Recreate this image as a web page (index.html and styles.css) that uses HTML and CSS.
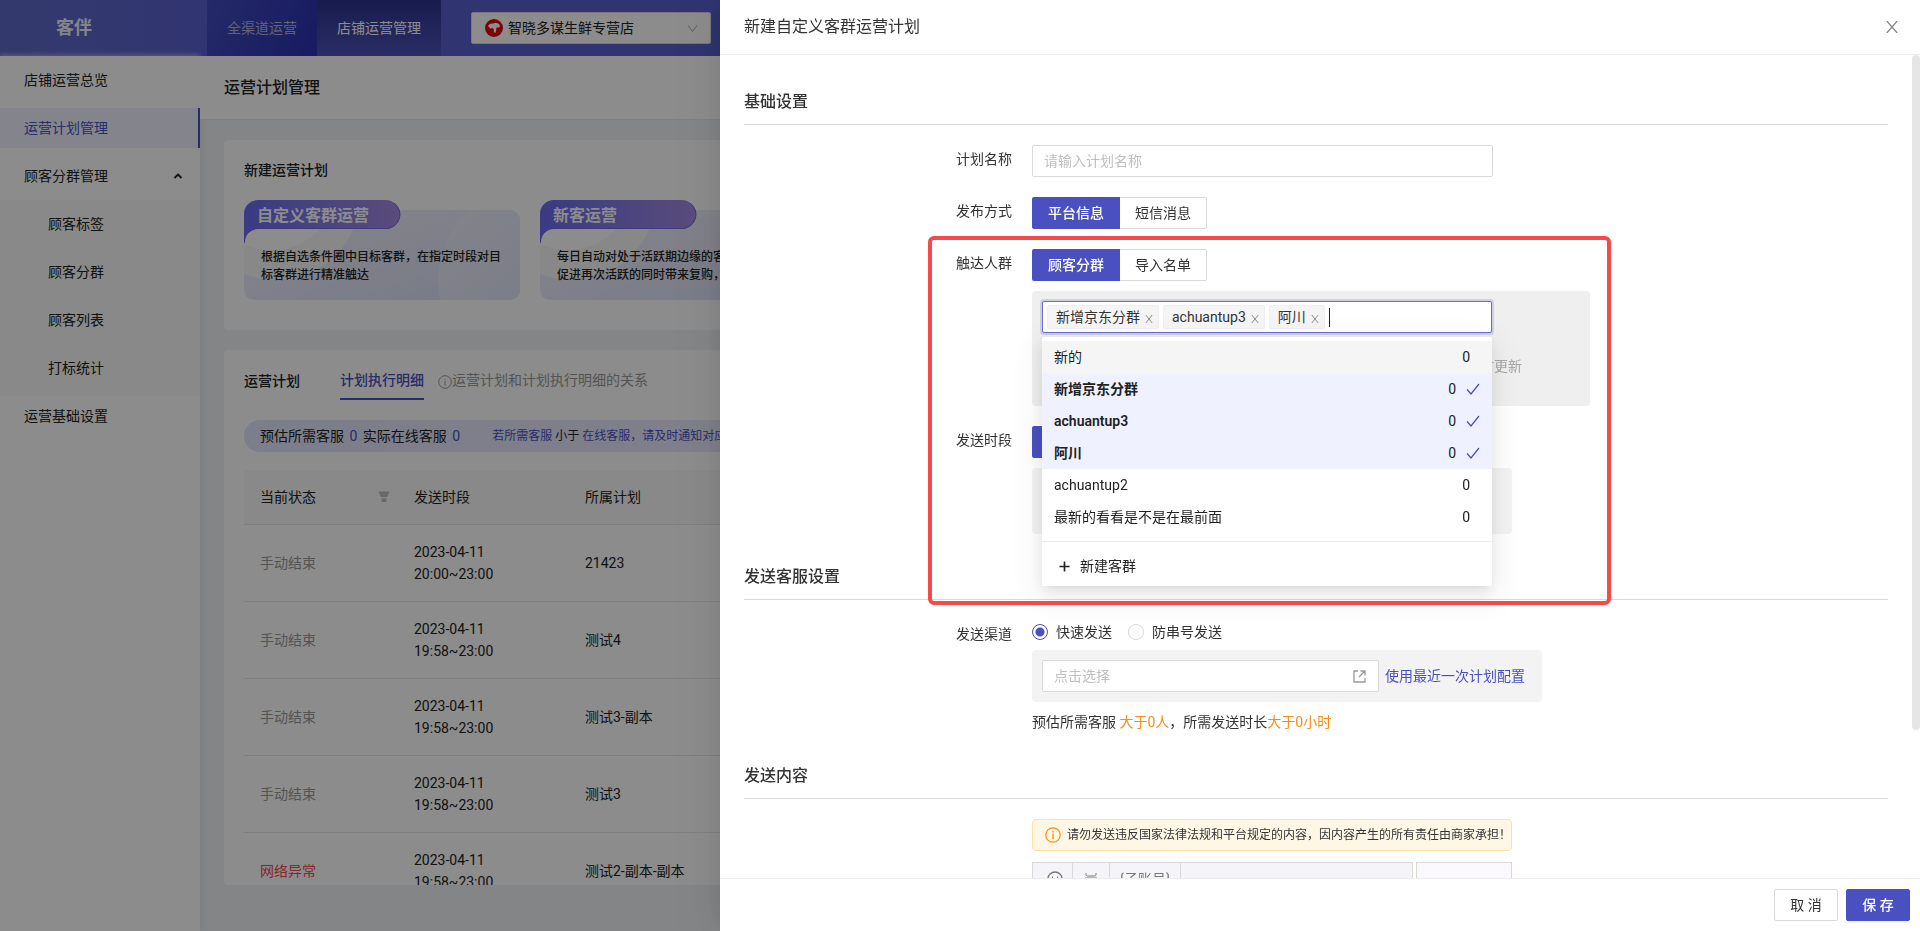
FILE: index.html
```
<!DOCTYPE html>
<html lang="zh-CN">
<head>
<meta charset="utf-8">
<title>客伴 - 运营计划管理</title>
<link rel="stylesheet" href="styles.css">
</head>
<body>
<div class="app">
  <header class="topbar">
    <div class="brand">客伴</div>
    <nav class="top-nav">
      <a class="top-link" href="#">全渠道运营</a>
      <a class="top-link top-link-active" href="#">店铺运营管理</a>
    </nav>
    <button class="shop-select" type="button">
      <svg class="shop-logo" viewBox="0 0 18 18"><circle cx="9" cy="9" r="9" fill="#e60012"/><path d="M3 7.2C3.800 5 6 4.300 8 4.700C9.200 3.600 11.600 3.500 12.800 4.600C14.800 5 15.400 6.800 14.400 8.300C13.600 8.900 12.800 8.300 11.800 8.500C10.800 9 11.700 11.500 10.600 13.400C9.800 14 8.600 13.600 8.800 12.300C9.200 11 8.700 9.800 7.800 9.200C7 8.800 6.400 10 5.200 9.600C4.400 9.200 4.800 8.300 4.200 7.900Z" fill="#fff"/></svg>
      <span class="shop-name">智晓多谋生鲜专营店</span>
      <svg class="chevron" viewBox="0 0 12 12"><path d="M1 2.5L6 9L11 2.5" fill="none" stroke="#bfbfbf" stroke-width="1.2"/></svg>
    </button>
  </header>
  <div class="shell">
    <aside class="sidebar">
      <a class="side-link" href="#">店铺运营总览</a>
      <a class="side-link side-active" href="#">运营计划管理</a>
      <a class="side-link" href="#">顾客分群管理
        <svg class="side-arrow" viewBox="0 0 10 10"><path d="M1.5 7L5 3.5L8.5 7" fill="none" stroke="#222" stroke-width="1.8"/></svg>
      </a>
      <div class="submenu">
        <a class="side-link" href="#">顾客标签</a>
        <a class="side-link" href="#">顾客分群</a>
        <a class="side-link" href="#">顾客列表</a>
        <a class="side-link" href="#">打标统计</a>
      </div>
      <a class="side-link" href="#">运营基础设置</a>
    </aside>
    <main class="main">
      <h1 class="page-title">运营计划管理</h1>
      <div class="content">
        <section class="card card-new">
          <h2 class="card-title">新建运营计划</h2>
          <div class="features">
            <article class="feature">
              <svg class="feature-bg" viewBox="0 0 276 100">
                <defs>
                  <linearGradient id="base" x1="0" y1="0" x2="1" y2="1"><stop offset="0" stop-color="#f4f3fa"/><stop offset="1" stop-color="#d9def6"/></linearGradient>
                  <linearGradient id="ribbon" x1="0" y1="0" x2="1" y2="0"><stop offset="0" stop-color="#6a6bf0"/><stop offset="1" stop-color="#a48be0"/></linearGradient>
                  <linearGradient id="arc" x1="0" y1="0" x2="1" y2="1"><stop offset="0" stop-color="#f0f2fc"/><stop offset="1" stop-color="#d4daf2"/></linearGradient>
                  <clipPath id="plate"><rect y="10" width="276" height="90" rx="10"/></clipPath>
                </defs>
                <g clip-path="url(#plate)">
                  <rect y="10" width="276" height="90" fill="url(#base)"/>
                  <circle cx="32" cy="-4" r="84" fill="#f8f8f8"/>
                  <circle cx="28" cy="-14" r="65" fill="#fff" stroke="#f2f3f3"/>
                  <circle cx="290" cy="80" r="96" fill="url(#arc)"/>
                </g>
                <path d="M0 44V14A14 14 0 0 1 14 0H141.500A14.500 14.500 0 0 1 141.500 29H14A13 13 0 0 0 1 42Z" fill="url(#ribbon)"/>
                <path d="M14 28.500H141.500A14 14 0 0 0 150 3" fill="none" stroke="#7768de"/>
              </svg>
              <h3 class="feature-title">自定义客群运营</h3>
              <p class="feature-text">根据自选条件圈中目标客群，在指定时段对目标客群进行精准触达</p>
            </article>
            <article class="feature">
              <svg class="feature-bg" viewBox="0 0 276 100">
                <g clip-path="url(#plate)">
                  <rect y="10" width="276" height="90" fill="url(#base)"/>
                  <circle cx="32" cy="-4" r="84" fill="#f8f8f8"/>
                  <circle cx="28" cy="-14" r="65" fill="#fff" stroke="#f2f3f3"/>
                  <circle cx="290" cy="80" r="96" fill="url(#arc)"/>
                </g>
                <path d="M0 44V14A14 14 0 0 1 14 0H141.500A14.500 14.500 0 0 1 141.500 29H14A13 13 0 0 0 1 42Z" fill="url(#ribbon)"/>
                <path d="M14 28.500H141.500A14 14 0 0 0 150 3" fill="none" stroke="#7768de"/>
              </svg>
              <h3 class="feature-title">新客运营</h3>
              <p class="feature-text">每日自动对处于活跃期边缘的客户触达，<br>促进再次活跃的同时带来复购，提升销量</p>
            </article>
          </div>
        </section>
        <section class="card card-list">
          <div class="tabs">
            <button class="tab" type="button">运营计划</button>
            <button class="tab tab-active" type="button">计划执行明细</button>
            <a class="tab-help" href="#">
              <svg class="icon-14" viewBox="0 0 14 14"><circle cx="7" cy="7" r="6.300" fill="none" stroke="#999" stroke-width="1"/><path d="M7 5.800V10.500M7 3.500V4.700" stroke="#999"/></svg>运营计划和计划执行明细的关系</a>
          </div>
          <div class="summary">
            <span>预估所需客服 <b class="num">0</b> 实际在线客服 <b class="num">0</b></span>
            <span class="summary-tip"><em>若所需客服</em> 小于 <em>在线客服，请及时通知对应客服上线</em></span>
          </div>
          <div class="table-wrap">
          <table class="table">
            <thead>
              <tr><th class="col-state"><div class="th-flex">当前状态
                <svg class="filter" viewBox="0 0 12 12"><path d="M.5 .5H11.500L9 6.200H3ZM3.500 7.400H8.500V11H3.500Z" fill="#bfbfbf"/></svg></div></th><th class="col-time">发送时段</th><th>所属计划</th></tr>
            </thead>
            <tbody>
              <tr><td class="muted">手动结束</td><td>2023-04-11<br>20:00~23:00</td><td>21423</td></tr>
              <tr><td class="muted">手动结束</td><td>2023-04-11<br>19:58~23:00</td><td>测试4</td></tr>
              <tr><td class="muted">手动结束</td><td>2023-04-11<br>19:58~23:00</td><td>测试3-副本</td></tr>
              <tr><td class="muted">手动结束</td><td>2023-04-11<br>19:58~23:00</td><td>测试3</td></tr>
              <tr><td class="error">网络异常</td><td>2023-04-11<br>19:58~23:00</td><td>测试2-副本-副本</td></tr>
            </tbody>
          </table>
          </div>
        </section>
      </div>
    </main>
  </div>
</div>

<div class="mask"></div>

<section class="drawer" role="dialog" aria-label="新建自定义客群运营计划">
  <header class="drawer-head">
    <h2 class="drawer-title">新建自定义客群运营计划</h2>
    <button class="close" type="button" aria-label="关闭"><svg class="close-icon" viewBox="0 0 12 12"><path d="M.8 0L11.200 12M11.200 0L.8 12" stroke="#888" stroke-width="1.300"/></svg></button>
  </header>
  <div class="drawer-body">
    <h3 class="group-title">基础设置</h3>
    <div class="row">
      <label class="label" for="plan-name">计划名称</label>
      <input class="input" id="plan-name" type="text" placeholder="请输入计划名称">
    </div>
    <div class="row">
      <span class="label">发布方式</span>
      <div class="segment"><button class="seg seg-on" type="button">平台信息</button><button class="seg" type="button">短信消息</button></div>
    </div>
    <div class="row">
      <span class="label">触达人群</span>
      <div class="stack">
        <div class="segment"><button class="seg seg-on" type="button">顾客分群</button><button class="seg" type="button">导入名单</button></div>
        <div class="panel panel-crowd">
          <div class="select-wrap">
            <div class="multi">
              <span class="tag">新增京东分群<svg class="tag-x" viewBox="0 0 8 8"><path d="M.8 0L7.200 8M7.200 0L.8 8" stroke="#8c8c8c"/></svg></span>
              <span class="tag">achuantup3<svg class="tag-x" viewBox="0 0 8 8"><path d="M.8 0L7.200 8M7.200 0L.8 8" stroke="#8c8c8c"/></svg></span>
              <span class="tag">阿川<svg class="tag-x" viewBox="0 0 8 8"><path d="M.8 0L7.200 8M7.200 0L.8 8" stroke="#8c8c8c"/></svg></span>
              <span class="caret"></span>
            </div>
            <div class="dropdown">
              <ul class="options" role="listbox" aria-label="顾客分群">
                <li class="option option-hover" role="option">新的<span class="count">0</span></li>
                <li class="option option-on" role="option" aria-selected="true">新增京东分群<span class="count">0</span><svg class="check" viewBox="0 0 14 14"><path d="M1 7.500L5 12L13 2" fill="none" stroke="#4a50bf" stroke-width="1.300"/></svg></li>
                <li class="option option-on" role="option" aria-selected="true">achuantup3<span class="count">0</span><svg class="check" viewBox="0 0 14 14"><path d="M1 7.500L5 12L13 2" fill="none" stroke="#4a50bf" stroke-width="1.300"/></svg></li>
                <li class="option option-on" role="option" aria-selected="true">阿川<span class="count">0</span><svg class="check" viewBox="0 0 14 14"><path d="M1 7.500L5 12L13 2" fill="none" stroke="#4a50bf" stroke-width="1.300"/></svg></li>
                <li class="option" role="option">achuantup2<span class="count">0</span></li>
                <li class="option" role="option">最新的看看是不是在最前面<span class="count">0</span></li>
              </ul>
              <button class="add" type="button"><svg class="add-icon" viewBox="0 0 12 12"><path d="M6 .5V11.500M.5 6H11.500" stroke="#222" stroke-width="1.800"/></svg>新建客群</button>
            </div>
          </div>
          <p class="refresh">时更新</p>
        </div>
      </div>
    </div>
    <div class="row">
      <span class="label">发送时段</span>
      <div class="stack">
        <div class="segment"><button class="seg seg-on seg-blank" type="button" aria-label="发送时段"></button></div>
        <div class="panel panel-time"></div>
      </div>
    </div>

    <h3 class="group-title group-next">发送客服设置</h3>
    <div class="row">
      <span class="label">发送渠道</span>
      <div class="stack channel">
        <div class="radios">
          <label class="radio"><input class="dot" type="radio" name="channel" checked>快速发送</label>
          <label class="radio"><input class="dot" type="radio" name="channel">防串号发送</label>
        </div>
        <div class="panel panel-channel">
          <button class="picker" type="button">点击选择
            <svg class="out-icon" viewBox="0 0 13 13"><path d="M5 1H1V12H12V8M7.500 1H12V5.500M12 1L6 7" fill="none" stroke="#999" stroke-width="1.300"/></svg></button>
          <a class="link" href="#">使用最近一次计划配置</a>
        </div>
        <p class="note">预估所需客服 <span class="warn">大于0人</span>，所需发送时长<span class="warn">大于0小时</span></p>
      </div>
    </div>

    <h3 class="group-title group-next">发送内容</h3>
    <div class="row">
      <span class="label"></span>
      <div class="stack editor">
        <div class="alert"><svg class="alert-icon" viewBox="0 0 16 16"><circle cx="8" cy="8" r="7.200" fill="none" stroke="#fa8c16" stroke-width="1.200"/><path d="M8 6.500V12M8 4V5.500" stroke="#fa8c16" stroke-width="1.400"/></svg>请勿发送违反国家法律法规和平台规定的内容，因内容产生的所有责任由商家承担！</div>
        <div class="editor-row">
          <div class="toolbar">
            <button class="tool tool-a" type="button" aria-label="表情"><svg class="icon-16" viewBox="0 0 16 16"><circle cx="8" cy="8" r="7" fill="none" stroke="#777" stroke-width="1.300"/><path d="M5.500 5.500V7M10.500 5.500V7M5 10Q8 12.500 11 10" fill="none" stroke="#777"/></svg></button>
            <button class="tool tool-b" type="button" aria-label="换行"><svg class="icon-12" viewBox="0 0 12 12"><path d="M1 0V1.500Q1 3 2.500 3H9.500Q11 3 11 1.500V0M0 5H12M1 12V10.500Q1 9 2.500 9H9.500Q11 9 11 10.500V12" fill="none" stroke="#777"/></svg></button>
            <button class="tool tool-c" type="button">{子账号}</button>
          </div>
          <div class="preview"></div>
        </div>
      </div>
    </div>
    <div class="scroll-thumb"></div>
    <div class="highlight"></div>
  </div>
  <footer class="drawer-foot">
    <button class="btn" type="button">取 消</button>
    <button class="btn btn-primary" type="button">保 存</button>
  </footer>
</section>
</body>
</html>
```

FILE: styles.css
```
* { box-sizing: border-box; margin: 0; padding: 0; }
html, body { height: 100%; overflow: hidden; }
body {
  font-family: Roboto, "Noto Sans CJK SC", sans-serif;
  font-size: 14px;
  line-height: 22px;
  color: #333;
}
button, input { font: inherit; color: inherit; }
button { background: none; border: 0; cursor: pointer; }
a { color: inherit; text-decoration: none; }
svg { display: block; flex: none; }

.app { height: 100vh; display: flex; flex-direction: column; color: #222; isolation: isolate; }
.topbar {
  height: 56px; flex: none; display: flex; align-items: center;
  background: linear-gradient(90deg, #6069c6, #5a61cf 200px, #5259c8);
}
.brand { width: 207px; padding-left: 56px; font-size: 18px; font-weight: 700; color: #f0f0ff; }
.top-nav { display: flex; height: 56px; }
.top-link { display: flex; align-items: center; padding: 0 20px; width: 110px; color: #b4b4d6; background: linear-gradient(115deg, #424cc0, #2a31b0); }
.top-link-active { width: 124px; color: #fff; background: linear-gradient(#2d338f, #4c53b8); }
.shop-select {
  width: 240px; height: 32px; margin-left: 30px; padding: 0 12px 0 13px;
  display: flex; align-items: center; gap: 5px; background: #fff; border: 1px solid #d9d9d9; border-radius: 2px;
}
.shop-logo { width: 18px; height: 18px; }
.shop-name { flex: 1; text-align: left; }
.chevron { width: 11px; height: 11px; }

.shell { flex: 1; min-height: 0; display: flex; background: #f0f2f5; }
.sidebar { width: 200px; flex: none; background: #fff; box-shadow: 2px 0 8px rgba(0, 0, 0, .08), 0 -2px 4px rgba(255, 255, 255, .4); padding-top: 4px; }
.side-link { display: flex; align-items: center; justify-content: space-between; height: 40px; padding: 0 17px 0 24px; margin-bottom: 8px; }
.side-active { color: #4a50bf; background: #f0f1ff; border-right: 2px solid #4a50bf; }
.side-arrow { width: 10px; height: 10px; }
.submenu { background: #f9fafb; padding-top: 4px; margin-top: -4px; overflow: hidden; }
.submenu .side-link { padding-left: 48px; }

.main { flex: 1; min-width: 0; display: flex; flex-direction: column; }
.page-title { height: 64px; flex: none; padding-left: 24px; line-height: 64px; font-size: 16px; font-weight: 500; background: #fff; border-bottom: 1px solid #e6e8f0; }
.content { flex: 1; min-height: 0; padding: 20px 24px 46px; display: flex; flex-direction: column; gap: 20px; }
.card { background: #fff; border-radius: 4px; padding: 20px; }
.card-new { height: 190px; flex: none; }
.card-title { font-size: 14px; font-weight: 500; line-height: 20px; margin-bottom: 20px; }
.features { display: flex; gap: 20px; }
.feature { width: 276px; height: 100px; flex: none; display: grid; }
.feature-bg { grid-area: 1 / 1; width: 276px; height: 100px; }
.feature-title { grid-area: 1 / 1; padding: 4px 13px; line-height: 24px; font-size: 16px; font-weight: 700; color: #fff; z-index: 1; }
.feature-text { grid-area: 1 / 1; padding: 48px 17px 0; font-size: 12px; line-height: 18px; font-weight: 500; z-index: 1; }
.card-list { flex: 1; min-height: 0; padding-bottom: 0; display: flex; flex-direction: column; overflow: hidden; }
.tabs { display: flex; align-items: flex-start; height: 50px; flex: none; }
.tab { height: 30px; padding-bottom: 8px; line-height: 20px; margin-right: 40px; font-weight: 500; }
.tab-active { color: #4a50bf; border-bottom: 2px solid #4a50bf; margin-right: 14px; }
.tab-help { display: flex; align-items: center; line-height: 20px; color: #999; }
.icon-14 { width: 14px; height: 14px; margin-top: 4px; }
.summary { height: 32px; flex: none; display: flex; align-items: center; gap: 30px; padding-left: 16px; margin-bottom: 18px; border-radius: 16px; background: linear-gradient(90deg, #e4e5fd, #f3f3ff); white-space: nowrap; }
.num { margin: 0 2px; font-weight: 400; color: #4a50bf; }
.summary-tip { font-size: 12px; }
.summary-tip em { font-style: normal; color: #4a50bf; }
.table-wrap { min-height: 0; overflow: hidden; }
.table { width: 100%; border-collapse: collapse; table-layout: fixed; }
.table th { height: 54px; background: #fafafa; border-bottom: 1px solid #e8e8e8; font-weight: 400; text-align: left; padding: 0 0 0 16px; }
.table td { height: 77px; border-bottom: 1px solid #e8e8e8; padding: 0 0 0 16px; }
.col-state { width: 154px; }
.col-time { width: 171px; }
.th-flex { display: flex; align-items: center; justify-content: space-between; padding-right: 8px; }
.filter { width: 12px; height: 12px; }
.muted { color: #999; }
.error { color: #f5484b; }

.mask { position: fixed; inset: 0; background: rgba(0, 0, 0, .45); }

.drawer {
  position: fixed; top: 0; right: 0; bottom: 0; width: 62.5vw;
  display: flex; flex-direction: column; background: #fff;
  box-shadow: -6px 0 16px -8px rgba(0, 0, 0, .08), -9px 0 28px rgba(0, 0, 0, .05), -12px 0 48px 16px rgba(0, 0, 0, .03);
}
.drawer-head { height: 55px; flex: none; display: flex; align-items: center; justify-content: space-between; padding: 0 22px 0 24px; border-bottom: 1px solid #ededed; }
.drawer-title { font-size: 16px; font-weight: 400; }
.close { width: 12px; height: 12px; }
.close-icon { width: 12px; height: 12px; }
.drawer-body { position: relative; flex: 1; min-height: 0; overflow: hidden; padding: 35px 32px 0 24px; }
.group-title { font-size: 16px; font-weight: 500; line-height: 24px; padding-bottom: 10px; border-bottom: 1px solid #d9d9d9; margin-bottom: 20px; }
.group-next { margin-top: 31px; }
.row { display: grid; grid-template-columns: 268px 1fr; column-gap: 20px; align-items: start; margin-bottom: 20px; }
.row:has(+ .group-title) { margin-bottom: 0; }
.label { text-align: right; line-height: 28px; }
.input { width: 461px; height: 32px; padding: 0 11px; border: 1px solid #d9d9d9; border-radius: 2px; outline: 0; }
.input::placeholder { color: #bfbfbf; }
.stack { display: flex; flex-direction: column; align-items: flex-start; gap: 10px; }
.segment { display: flex; }
.seg { height: 32px; padding: 0 15px; border: 1px solid #d9d9d9; border-left-width: 0; border-radius: 0 2px 2px 0; }
.seg-on { padding: 0 16px; border: 0; border-radius: 2px 0 0 2px; background: #4a50bf; color: #fff; font-weight: 500; }
.seg-blank { width: 88px; }
.panel { border-radius: 4px; background: #f3f3f3; padding: 10px; }
.panel-crowd { width: 558px; height: 115px; background: #efefef; }
.panel-time { width: 480px; height: 66px; }
.select-wrap { position: relative; z-index: 2; width: 450px; }
.multi { height: 32px; display: flex; align-items: center; gap: 4px; padding: 0 4px; background: #fff; border: 1px solid #6a6fd0; border-radius: 2px; box-shadow: 0 0 0 2px rgba(74, 80, 191, .2); }
.tag { height: 24px; display: flex; align-items: center; gap: 5px; padding: 0 5px 0 8px; background: #f5f5f5; border: 1px solid #f0f0f0; border-radius: 2px; }
.tag-x { width: 8px; height: 8px; margin-top: 3px; }
.caret { width: 1px; height: 19px; background: #222; }
.dropdown {
  position: absolute; top: 36px; left: 0; right: 0; background: #fff; border-radius: 2px; padding-top: 4px; color: #222;
  box-shadow: 0 3px 6px -4px rgba(0, 0, 0, .12), 0 6px 16px rgba(0, 0, 0, .08), 0 9px 28px 8px rgba(0, 0, 0, .05);
}
.options { list-style: none; padding-bottom: 8px; border-bottom: 1px solid #ececec; }
.option { height: 32px; display: flex; align-items: center; padding: 0 12px; }
.count { margin-left: auto; padding-right: 10px; }
.option-hover { background: #f5f5f5; }
.option-on { background: #f0f1ff; font-weight: 600; }
.option-on .count { font-weight: 400; }
.check { width: 14px; height: 14px; }
.add { display: flex; align-items: center; gap: 10px; width: 100%; height: 44px; padding: 4px 17px 0; }
.add-icon { width: 11px; height: 11px; }
.refresh { width: 480px; margin-top: 22px; text-align: right; color: #a6a6a6; }
.channel { gap: 0; }
.radios { display: flex; gap: 16px; height: 30px; }
.radio { display: flex; align-items: center; gap: 8px; height: 24px; }
.dot { appearance: none; width: 16px; height: 16px; border: 1px solid #d9d9d9; border-radius: 50%; background: #fff; }
.dot:checked { border-color: #4a50bf; background: radial-gradient(circle, #4a50bf 4px, #fff 5px); }
.panel-channel { width: 510px; height: 52px; display: flex; align-items: center; gap: 6px; }
.picker { width: 337px; height: 32px; display: flex; align-items: center; justify-content: space-between; padding: 0 12px 0 11px; background: #fff; border: 1px solid #d9d9d9; border-radius: 2px; color: #bfbfbf; }
.out-icon { width: 13px; height: 13px; }
.link { color: #4a50bf; }
.note { margin-top: 10px; line-height: 21px; }
.warn { color: #fa8c16; }
.editor { width: 480px; align-items: stretch; gap: 11px; }
.alert { height: 32px; display: flex; align-items: center; gap: 6px; padding: 0 0 0 12px; font-size: 12px; background: #fff7e6; border: 1px solid #ffe2a0; border-radius: 4px; white-space: nowrap; }
.alert-icon { width: 16px; height: 16px; }
.editor-row { display: flex; gap: 3px; height: 120px; }
.toolbar { flex: 1; display: flex; height: 34px; background: #f5f4f8; border: 1px solid #d9d9d9; }
.tool { display: flex; align-items: center; justify-content: center; border-right: 1px solid #d9d9d9; color: #777; }
.tool-a { width: 40px; padding-left: 4px; }
.tool-b { width: 37px; }
.tool-c { width: 71px; }
.icon-16 { width: 16px; height: 16px; }
.icon-12 { width: 12px; height: 12px; }
.preview { width: 96px; background: #fbf9fd; border: 1px solid #d9d9d9; }
.scroll-thumb { position: absolute; top: 0; right: 0; width: 8px; height: 82%; border-radius: 4px; background: #e6e6e6; }
.highlight { position: absolute; z-index: 3; top: 181px; left: 208px; width: 683px; height: 369px; border: 4px solid #f54a48; border-radius: 6px; pointer-events: none; }

.drawer-foot { height: 53px; flex: none; display: flex; align-items: center; justify-content: flex-end; gap: 8px; padding: 0 10px; border-top: 1px solid #ededed; }
.btn { width: 64px; height: 32px; border: 1px solid #d9d9d9; border-radius: 2px; }
.btn-primary { background: #4a50bf; border-color: #4a50bf; color: #fff; font-weight: 500; box-shadow: 0 2px 0 rgba(0, 0, 0, .04); }
```
